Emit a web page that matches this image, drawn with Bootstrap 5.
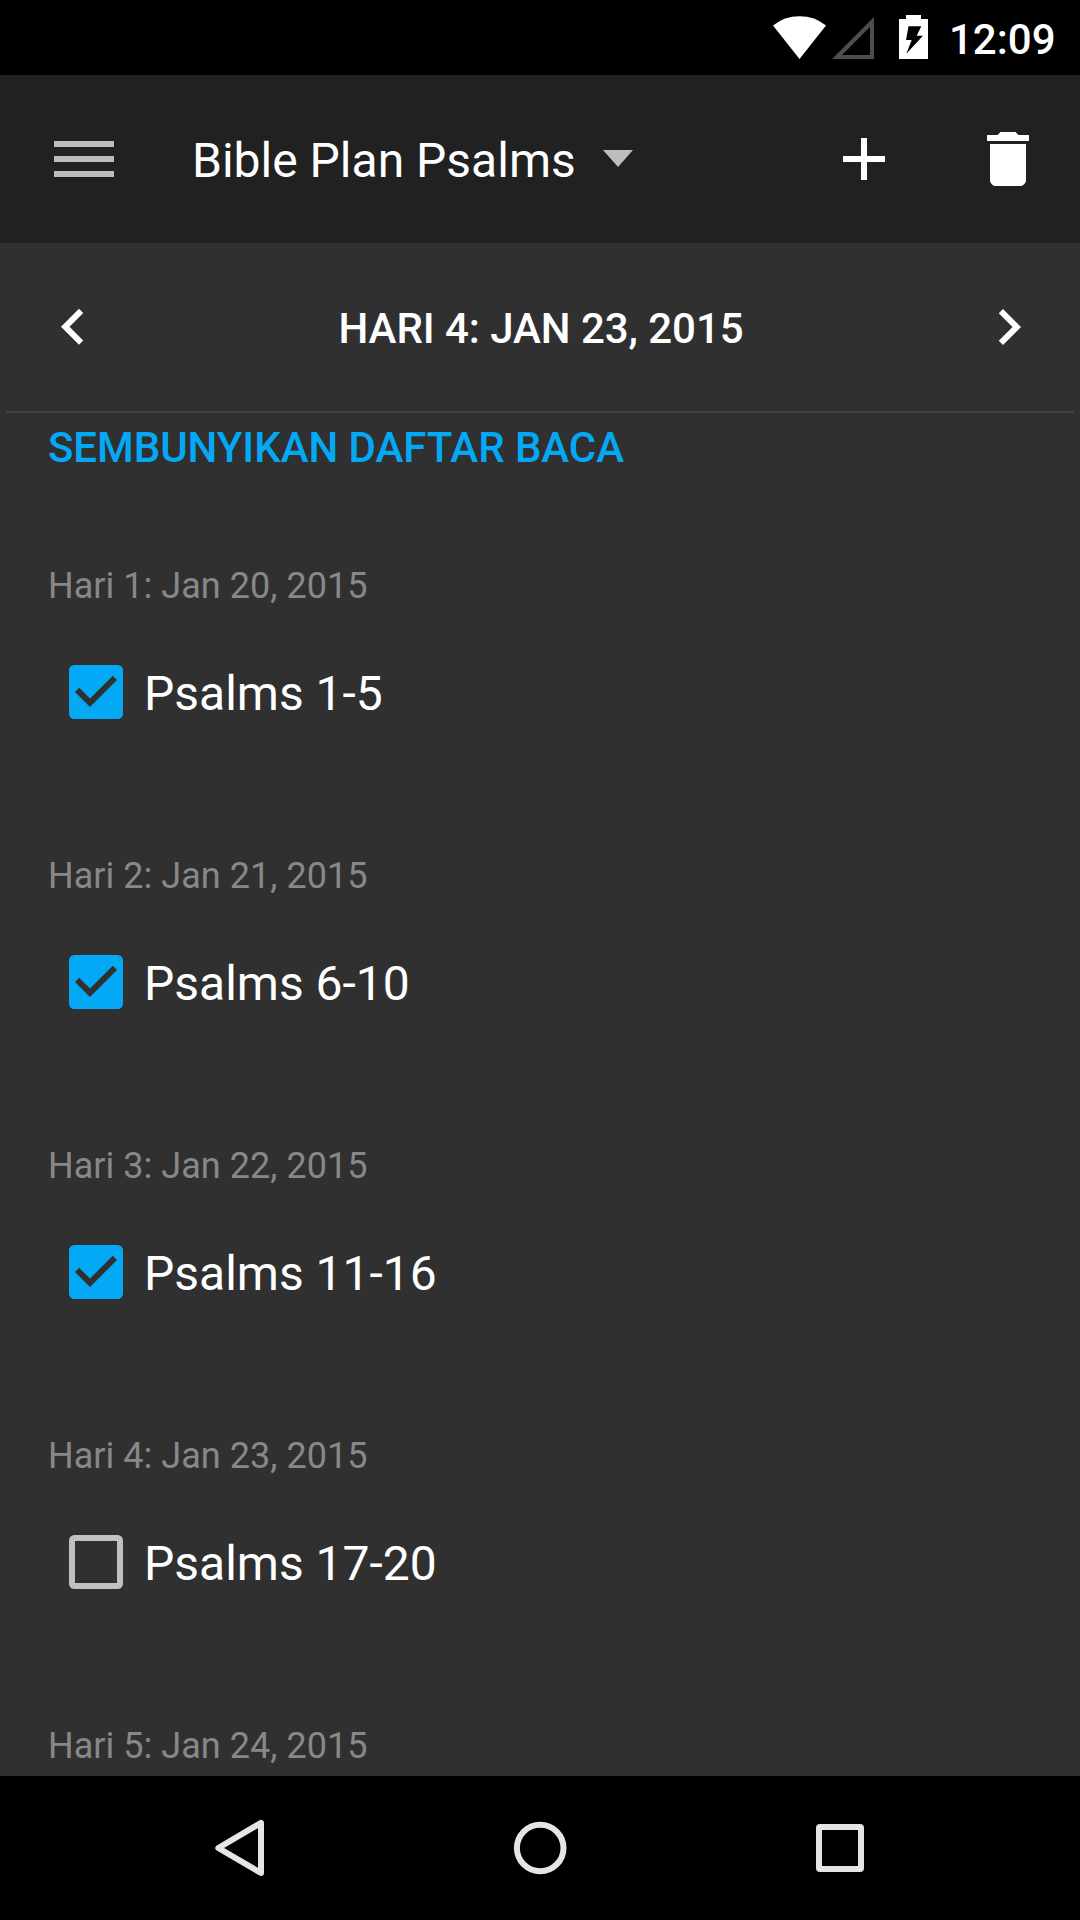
<!DOCTYPE html>
<html lang="id" data-bs-theme="dark">
<head>
<meta charset="utf-8">
<meta name="viewport" content="width=device-width, initial-scale=1">
<title>Bible Plan Psalms</title>
<link href="https://cdn.jsdelivr.net/npm/bootstrap@5.3.0/dist/css/bootstrap.min.css" rel="stylesheet">
<style>
  body { font-family: Roboto, "Noto Sans", sans-serif; background: #303030; color: #fff; overflow: hidden; }
  svg { display: block; flex: none; }
  .screen { width: 1080px; height: 1920px; }
  .status-bar { height: 75px; background: #000; padding-right: 24px; }
  .clock { font-size: 42px; font-weight: 500; line-height: 48px; padding-top: 4px; margin-left: 21px; width: 107px; }
  .app-bar { height: 168px; background: #212121; padding: 0 36px 0 54px; }
  .plan-picker { font-size: 48px; line-height: 56px; margin-left: 78px; }
  .plan-name { padding-top: 3px; }
  .picker-arrow { margin-bottom: 2px; }
  .day-bar { height: 168px; padding: 0 35px 0 37px; }
  .day-title { font-size: 42px; font-weight: 500; line-height: 48px; padding-top: 3px; letter-spacing: -.06px; }
  .divider { height: 2px; background: #404040; margin: 0 6px; }
  .toggle-list { color: #03a9f4; font-size: 42px; font-weight: 500; line-height: 50px; margin-top: 10px; letter-spacing: -.06px; }
  .plan-list { padding: 0 48px; }
  .days { margin-top: 91px; }
  .day { margin-bottom: 126px; }
  .day-label { font-size: 36px; line-height: 44px; color: #888; margin-bottom: 48px; letter-spacing: .04px; }
  .reading { height: 72px; padding-left: 12px; }
  .reading-name { font-size: 48px; line-height: 56px; padding-top: 3px; margin-left: 12px; }
  .nav-keys { height: 144px; background: #000; }
  .nav-keys .btn { width: 300px; }
</style>
</head>
<body>
<div class="screen d-flex flex-column overflow-hidden">
  <header class="status-bar d-flex align-items-center justify-content-end flex-shrink-0">
    <svg width="155" height="75" viewBox="773 0 155 75">
      <path fill="#fff" d="M773 25.5Q784 16.2 799.5 16.2T826 25.5L799.5 59Z"/>
      <path fill="#4d4d4d" fill-rule="evenodd" d="M874 17V59H832ZM870 27L842 55H870Z"/>
      <path fill="#fff" fill-rule="evenodd" d="M906 15h15v4h7v40h-29V19h7zM908.5 26.3L906 40h5.7l-5.4 13.7L923 35.7h-6.3l4.6-9.4z"/>
    </svg>
    <span class="clock text-nowrap">12:09</span>
  </header>

  <nav class="app-bar d-flex align-items-center flex-shrink-0">
    <button class="btn border-0 p-0" type="button" aria-label="Menu">
      <svg width="60" height="36"><path fill="#bdbdbd" d="M0 0h60v6H0zM0 15h60v6H0zM0 30h60v6H0z"/></svg>
    </button>
    <button class="plan-picker btn border-0 p-0 d-flex align-items-center text-white" type="button">
      <span class="plan-name text-nowrap">Bible Plan Psalms</span>
      <svg class="picker-arrow ms-4" width="38" height="20"><path fill="#bdbdbd" d="M3 2h30L18 19z"/></svg>
    </button>
    <div class="ms-auto d-flex gap-5">
      <button class="btn border-0 p-0 me-4" type="button" aria-label="Tambah">
        <svg width="72" height="72" viewBox="0 0 24 24"><path fill="#fff" d="M19 13h-6v6h-2v-6H5v-2h6V5h2v6h6z"/></svg>
      </button>
      <button class="btn border-0 p-0" type="button" aria-label="Hapus">
        <svg width="72" height="72" viewBox="0 0 24 24"><path fill="#fff" d="M6 19c0 1.1.9 2 2 2h8c1.100 0 2-.9 2-2V7H6zM19 4h-3.500l-1-1h-5l-1 1H5v2h14z"/></svg>
      </button>
    </div>
  </nav>

  <section class="day-bar d-flex align-items-center justify-content-between flex-shrink-0">
    <button class="btn border-0 p-0" type="button" aria-label="Sebelumnya">
      <svg width="72" height="72" viewBox="0 0 24 24"><path fill="#fff" d="M15.410 7.310L14 5.900l-6 6 6 6 1.410-1.410L10.830 11.900z"/></svg>
    </button>
    <span class="day-title text-nowrap">HARI 4: JAN 23, 2015</span>
    <button class="btn border-0 p-0" type="button" aria-label="Berikutnya">
      <svg width="72" height="72" viewBox="0 0 24 24"><path fill="#fff" d="M10 6L8.590 7.410 13.170 12l-4.580 4.590L10 18l6-6z"/></svg>
    </button>
  </section>
  <div class="divider flex-shrink-0"></div>

  <main class="plan-list flex-grow-1 overflow-hidden">
    <a class="toggle-list d-block text-decoration-none" href="#"><span>SEMBUNYIKAN DAFTAR BACA</span></a>
    <div class="days">
      <div class="day">
        <div class="day-label"><span>Hari 1: Jan 20, 2015</span></div>
        <div class="reading d-flex align-items-center">
          <svg width="72" height="72" viewBox="0 0 24 24"><rect x="3" y="3" width="18" height="18" rx="1.8" fill="#03a9f4"/><path fill="#303030" d="M10 17l-5-5 1.410-1.410L10 14.170l7.590-7.590L19 8z"/></svg>
          <span class="reading-name">Psalms 1-5</span>
        </div>
      </div>
      <div class="day">
        <div class="day-label"><span>Hari 2: Jan 21, 2015</span></div>
        <div class="reading d-flex align-items-center">
          <svg width="72" height="72" viewBox="0 0 24 24"><rect x="3" y="3" width="18" height="18" rx="1.8" fill="#03a9f4"/><path fill="#303030" d="M10 17l-5-5 1.410-1.410L10 14.170l7.590-7.590L19 8z"/></svg>
          <span class="reading-name">Psalms 6-10</span>
        </div>
      </div>
      <div class="day">
        <div class="day-label"><span>Hari 3: Jan 22, 2015</span></div>
        <div class="reading d-flex align-items-center">
          <svg width="72" height="72" viewBox="0 0 24 24"><rect x="3" y="3" width="18" height="18" rx="1.8" fill="#03a9f4"/><path fill="#303030" d="M10 17l-5-5 1.410-1.410L10 14.170l7.590-7.590L19 8z"/></svg>
          <span class="reading-name">Psalms 11-16</span>
        </div>
      </div>
      <div class="day">
        <div class="day-label"><span>Hari 4: Jan 23, 2015</span></div>
        <div class="reading d-flex align-items-center">
          <svg width="72" height="72" viewBox="0 0 24 24"><path fill="#c1c1c1" fill-rule="evenodd" d="M4.800 3h14.400a1.800 1.800 0 0 1 1.800 1.800v14.400a1.800 1.800 0 0 1-1.800 1.800H4.800A1.800 1.800 0 0 1 3 19.200V4.800A1.800 1.800 0 0 1 4.800 3zM5 5v14h14V5z"/></svg>
          <span class="reading-name">Psalms 17-20</span>
        </div>
      </div>
      <div class="day-label mb-0"><span>Hari 5: Jan 24, 2015</span></div>
    </div>
  </main>

  <footer class="nav-keys d-flex align-items-center justify-content-center flex-shrink-0">
    <button class="btn border-0 p-0 d-flex justify-content-center" type="button" aria-label="Kembali">
      <svg width="60" height="60" viewBox="210 1818 60 60"><path fill="none" stroke="#e5e5e5" stroke-width="6" stroke-linejoin="round" d="M261 1822.800V1873L218.300 1848Z"/></svg>
    </button>
    <button class="btn border-0 p-0 d-flex justify-content-center" type="button" aria-label="Beranda">
      <svg width="60" height="60"><circle cx="30.200" cy="30" r="23.300" fill="none" stroke="#e5e5e5" stroke-width="6"/></svg>
    </button>
    <button class="btn border-0 p-0 d-flex justify-content-center" type="button" aria-label="Terbaru">
      <svg width="60" height="60"><rect x="9" y="9" width="42" height="42" rx="1" fill="none" stroke="#e5e5e5" stroke-width="6" stroke-linejoin="round"/></svg>
    </button>
  </footer>
</div>
<script src="https://cdn.jsdelivr.net/npm/bootstrap@5.3.0/dist/js/bootstrap.bundle.min.js"></script>
</body>
</html>
